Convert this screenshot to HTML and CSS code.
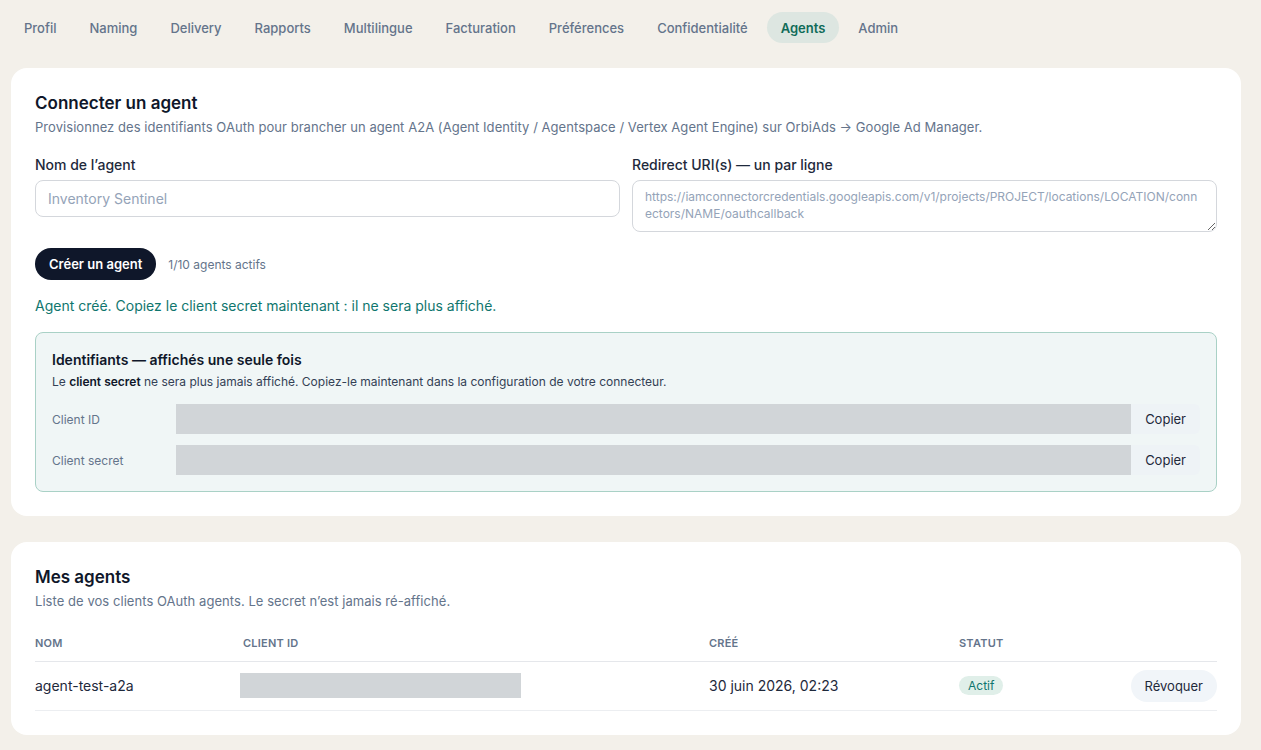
FILE: index.html
```html
<!DOCTYPE html>
<html lang="fr">
<head>
<meta charset="utf-8">
<title>Paramètres — Agents</title>
<link rel="stylesheet" href="styles.css">
</head>
<body>
<nav class="tabs">
  <a class="tab">Profil</a>
  <a class="tab">Naming</a>
  <a class="tab">Delivery</a>
  <a class="tab">Rapports</a>
  <a class="tab">Multilingue</a>
  <a class="tab">Facturation</a>
  <a class="tab">Préférences</a>
  <a class="tab">Confidentialité</a>
  <a class="tab active">Agents</a>
  <a class="tab">Admin</a>
</nav>

<main class="content">
  <section class="card">
    <h2 class="card-title">Connecter un agent</h2>
    <p class="card-sub">Provisionnez des identifiants OAuth pour brancher un agent A2A (Agent Identity / Agentspace / Vertex Agent Engine) sur OrbiAds → Google Ad Manager.</p>

    <div class="form-grid">
      <label class="field">
        <span class="field-label">Nom de l’agent</span>
        <input class="input" type="text" placeholder="Inventory Sentinel">
      </label>
      <label class="field">
        <span class="field-label">Redirect URI(s) — un par ligne</span>
        <textarea class="textarea" rows="2" placeholder="https://iamconnectorcredentials.googleapis.com/v1/projects/PROJECT/locations/LOCATION/connectors/NAME/oauthcallback"></textarea>
      </label>
    </div>

    <div class="actions">
      <button class="btn-primary">Créer un agent</button>
      <span class="quota">1/10 agents actifs</span>
    </div>

    <p class="success">Agent créé. Copiez le client secret maintenant : il ne sera plus affiché.</p>

    <div class="creds">
      <h3 class="creds-title">Identifiants — affichés une seule fois</h3>
      <p class="creds-sub">Le <strong>client secret</strong> ne sera plus jamais affiché. Copiez-le maintenant dans la configuration de votre connecteur.</p>
      <div class="cred-row">
        <span class="cred-label">Client ID</span>
        <span class="masked"></span>
        <button class="btn-copy">Copier</button>
      </div>
      <div class="cred-row">
        <span class="cred-label">Client secret</span>
        <span class="masked"></span>
        <button class="btn-copy">Copier</button>
      </div>
    </div>
  </section>

  <section class="card">
    <h2 class="card-title">Mes agents</h2>
    <p class="card-sub">Liste de vos clients OAuth agents. Le secret n’est jamais ré-affiché.</p>

    <table class="table">
      <thead>
        <tr>
          <th class="col-name">Nom</th>
          <th class="col-id">Client ID</th>
          <th class="col-date">Créé</th>
          <th class="col-status">Statut</th>
          <th class="col-action"></th>
        </tr>
      </thead>
      <tbody>
        <tr>
          <td class="col-name">agent-test-a2a</td>
          <td class="col-id"><span class="masked-sm"></span></td>
          <td class="col-date">30 juin 2026, 02:23</td>
          <td class="col-status"><span class="badge">Actif</span></td>
          <td class="col-action"><button class="btn-ghost">Révoquer</button></td>
        </tr>
      </tbody>
    </table>
  </section>
</main>
</body>
</html>
```

FILE: styles.css
```css
* { box-sizing: border-box; }

html, body {
  margin: 0;
  padding: 0;
  background: #f3f0ea;
  font-family: "Inter", "Noto Sans", sans-serif;
  color: #0f172a;
}

/* top tab bar */
.tabs {
  display: flex;
  align-items: center;
  gap: 5px;
  padding: 12px 10px 0;
  height: 43px;
}

.tab {
  display: inline-flex;
  align-items: center;
  height: 31px;
  padding: 0 14px;
  border-radius: 999px;
  font-size: 13px;
  font-weight: 500;
  color: #64748b;
  white-space: nowrap;
}

.tab.active {
  background: #dde6e1;
  color: #0f6b58;
  font-weight: 600;
}

.content {
  display: flex;
  flex-direction: column;
  gap: 26px;
  padding: 25px 20px 0 11px;
}

/* cards */
.card {
  background: #ffffff;
  border-radius: 16px;
  padding: 23px 24px 24px;
}

.card-title {
  margin: 0;
  font-size: 17px;
  font-weight: 600;
  line-height: 24px;
  color: #0f172a;
}

.card-sub {
  margin: 2px 0 0;
  font-size: 13px;
  line-height: 20px;
  color: #64748b;
  letter-spacing: 0.004em;
}

/* form */
.form-grid {
  display: grid;
  grid-template-columns: 1fr 1fr;
  gap: 12px;
  margin-top: 18px;
}

.field {
  display: flex;
  flex-direction: column;
  gap: 5px;
}

.field-label {
  font-size: 14px;
  font-weight: 500;
  line-height: 20px;
  color: #1e293b;
}

.input {
  height: 37px;
  padding: 0 12px;
  border: 1px solid #d4d7dc;
  border-radius: 8px;
  font: inherit;
  font-size: 14px;
  color: #0f172a;
  background: #fff;
}

.input::placeholder { color: #94a3b8; }

.textarea {
  height: 52px;
  padding: 7px 12px;
  border: 1px solid #d4d7dc;
  border-radius: 8px;
  font: inherit;
  font-size: 12px;
  line-height: 17px;
  color: #0f172a;
  background: #fff;
  resize: vertical;
}

.textarea::placeholder { color: #94a3b8; }

.actions {
  display: flex;
  align-items: center;
  gap: 12px;
  margin-top: 16px;
}

.btn-primary {
  height: 32px;
  padding: 0 14px;
  border: 0;
  border-radius: 999px;
  background: #0f172a;
  color: #fff;
  font: inherit;
  font-size: 13px;
  font-weight: 600;
}

.quota {
  font-size: 12px;
  color: #64748b;
}

.success {
  margin: 16px 0 0;
  font-size: 14px;
  line-height: 20px;
  color: #0f766e;
}

/* one-time credentials panel */
.creds {
  margin-top: 16px;
  padding: 17px 16px 16px;
  border: 1px solid #a9d1c6;
  border-radius: 8px;
  background: #f0f6f6;
}

.creds-title {
  margin: 0;
  font-size: 14px;
  font-weight: 600;
  line-height: 20px;
  color: #0f172a;
}

.creds-sub {
  margin: 3px 0 0;
  font-size: 12px;
  line-height: 18px;
  color: #334155;
}

.creds-sub strong {
  font-weight: 600;
  color: #0f172a;
}

.cred-row {
  display: flex;
  align-items: center;
  margin-top: 13px;
}

.cred-row + .cred-row { margin-top: 11px; }

.cred-label {
  width: 124px;
  flex: none;
  font-size: 12px;
  color: #64748b;
}

.masked {
  flex: 1;
  height: 30px;
  background: #d1d5d8;
}

.btn-copy {
  height: 30px;
  padding: 0 14px;
  border: 0;
  border-radius: 0 6px 6px 0;
  background: #eef3f6;
  color: #1e293b;
  font: inherit;
  font-size: 13px;
}

/* agents table */
.table {
  width: 100%;
  border-collapse: collapse;
  margin-top: 14px;
}

.table th {
  height: 36px;
  padding: 0;
  text-align: left;
  font-size: 11px;
  font-weight: 600;
  letter-spacing: 0.02em;
  text-transform: uppercase;
  color: #64748b;
  border-bottom: 1px solid #e5e7eb;
  vertical-align: middle;
}

.table td {
  height: 49px;
  padding: 0;
  font-size: 14px;
  color: #1e293b;
  border-bottom: 1px solid #eceef1;
  vertical-align: middle;
}

.col-name { width: 208px; }
.col-id { width: 466px; }
.col-date { width: 250px; }
.col-status { width: 160px; }
.col-action { text-align: right; }

.masked-sm {
  display: block;
  width: 281px;
  height: 25px;
  margin-left: -3px;
  background: #d1d5d8;
}

.badge {
  display: inline-flex;
  align-items: center;
  height: 19px;
  padding: 0 9px;
  border-radius: 999px;
  background: #e0efe9;
  color: #0f766e;
  font-size: 12px;
}

.btn-ghost {
  height: 32px;
  padding: 0 14px;
  border: 0;
  border-radius: 999px;
  background: #f1f5f9;
  color: #1e293b;
  font: inherit;
  font-size: 13px;
}
```
